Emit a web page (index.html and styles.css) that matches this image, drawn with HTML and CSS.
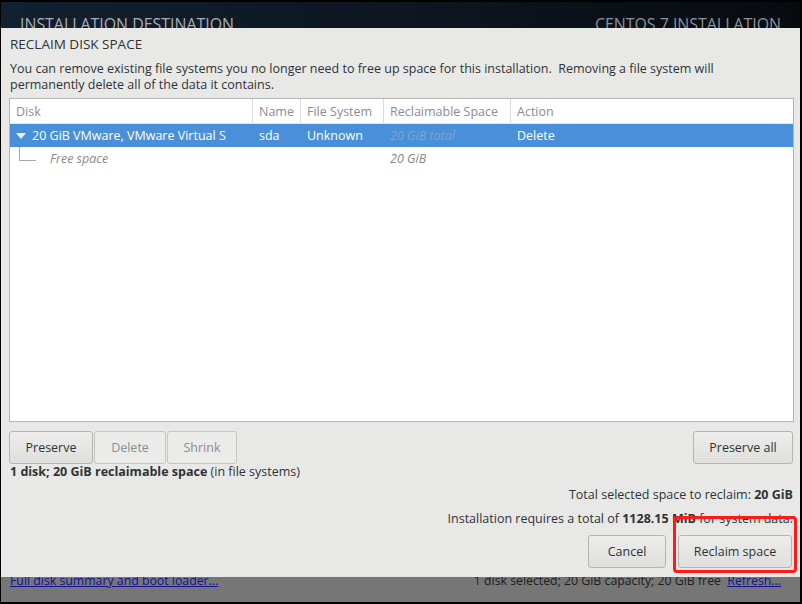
FILE: index.html
```html
<!DOCTYPE html>
<html>
<head>
<meta charset="utf-8">
<link rel="stylesheet" href="styles.css">
</head>
<body>
<div class="screen">
  <div class="header">
    <span class="h-title">INSTALLATION DESTINATION</span>
    <span class="h-product">CENTOS 7 INSTALLATION</span>
  </div>
  <div class="main">
    <div class="footer">
      <a class="link" href="#">Full disk summary and boot loader...</a>
      <span class="footer-right">1 disk selected; 20 GiB capacity; 20 GiB free&nbsp;&nbsp;<a class="link" href="#">Refresh...</a></span>
    </div>
  </div>

  <div class="dialog">
    <div class="d-title">RECLAIM DISK SPACE</div>
    <p class="d-desc">You can remove existing file systems you no longer need to free up space for this installation.&nbsp; Removing a file system will permanently delete all of the data it contains.</p>
    <div class="table">
      <div class="row head">
        <div class="c c-disk">Disk</div>
        <div class="c c-name">Name</div>
        <div class="c c-fs">File System</div>
        <div class="c c-rs">Reclaimable Space</div>
        <div class="c c-act">Action</div>
      </div>
      <div class="row sel">
        <div class="c c-disk"><span class="tri"></span>20 GiB VMware, VMware Virtual S</div>
        <div class="c c-name">sda</div>
        <div class="c c-fs">Unknown</div>
        <div class="c c-rs dim">20 GiB total</div>
        <div class="c c-act">Delete</div>
      </div>
      <div class="row child">
        <div class="c c-disk"><span class="tree"></span><span>Free space</span></div>
        <div class="c c-name"></div>
        <div class="c c-fs"></div>
        <div class="c c-rs">20 GiB</div>
        <div class="c c-act"></div>
      </div>
    </div>
    <div class="btn-row">
      <div class="group">
        <button class="btn b-preserve">Preserve</button>
        <button class="btn b-delete" disabled>Delete</button>
        <button class="btn b-shrink" disabled>Shrink</button>
      </div>
      <button class="btn b-all">Preserve all</button>
    </div>
    <div class="status"><b>1 disk; 20 GiB reclaimable space</b> (in file systems)</div>
    <div class="summary">
      <div class="sum-line">Total selected space to reclaim: <b>20 GiB</b></div>
      <div class="sum-line s2">Installation requires a total of <b>1128.15 MiB</b> for system data.</div>
    </div>
    <div class="actions">
      <button class="btn b-cancel">Cancel</button>
      <div class="highlight"><button class="btn b-reclaim">Reclaim space</button></div>
    </div>
  </div>
</div>
</body>
</html>
```

FILE: styles.css
```css
* { box-sizing: border-box; }
html, body { margin: 0; padding: 0; background: #000; }
body { font-family: "Open Sans", "DejaVu Sans", sans-serif; font-size: 12.5px; color: #2e3436; }

.screen {
  position: relative;
  width: 802px;
  height: 604px;
  background: #000;
  padding: 2px 2px 2px 1px;
  display: flex;
  flex-direction: column;
  overflow: hidden;
}

.header {
  height: 26px;
  flex-shrink: 0;
  overflow: hidden;
  background: linear-gradient(90deg, #13202f 0%, #0d1621 50%, #070b10 100%);
  display: flex;
  justify-content: space-between;
  align-items: flex-start;
  padding: 12px 19px 0 19px;
  color: #a9adb2;
  font-size: 15.9px;
  line-height: 20px;
}
.h-product { color: #8d9298; }

.main {
  flex: 1;
  background: #767676;
  display: flex;
  flex-direction: column;
  justify-content: flex-end;
}
.footer {
  display: flex;
  justify-content: space-between;
  padding: 0 19px 13px 9px;
  font-size: 12.3px;
  color: #1e1e1e;
}
.link { color: #12129a; text-decoration: underline; }

.dialog {
  position: absolute;
  left: 1px;
  top: 28px;
  width: 799px;
  height: 549px;
  background: #e8e8e7;
  padding: 7px 8px 0 8px;
  display: flex;
  flex-direction: column;
}
.dialog > * { flex-shrink: 0; }
.d-title { font-size: 13.5px; line-height: 18px; padding-left: 1px; }
.d-desc { margin: 8px 0 0 1px; line-height: 16px; width: 770px; }

.table {
  margin-top: 5px;
  width: 785px;
  height: 324px;
  background: #fff;
  border: 1px solid #b4b4b1;
}
.row { display: flex; height: 23px; align-items: center; }
.row.head { height: 25px; color: #8a8d8f; border-bottom: 1px solid #e6e6e6; }
.row.head .c { border-right: 1px solid #dcdcdc; height: 100%; display: flex; align-items: center; }
.row.head .c-act { border-right: none; }
.c { padding-left: 6px; white-space: nowrap; overflow: hidden; }
.c-disk { width: 243px; }
.c-name { width: 48px; }
.c-fs { width: 83px; }
.c-rs { width: 127px; }
.c-act { flex: 1; }

.row.sel { background: #4a90d9; color: #fff; }
.row.sel .dim { color: #7fa3cc; font-style: italic; }
.tri {
  display: inline-block;
  width: 0; height: 0;
  border-left: 5px solid transparent;
  border-right: 5px solid transparent;
  border-top: 6px solid #e9f1fb;
  margin: 0 6px 1px 0;
  vertical-align: middle;
}
.row.child { color: #888a85; font-style: italic; align-items: stretch; }
.row.child .c { display: flex; align-items: center; }
.row.child .c-disk { padding-left: 9px; }
.tree {
  align-self: flex-start;
  width: 17px;
  height: 14px;
  border-left: 1px solid #a8a8a8;
  border-bottom: 1px solid #a8a8a8;
  margin-right: 14px;
}

.btn-row {
  display: flex;
  justify-content: space-between;
  margin-top: 9px;
  width: 784px;
}
.group { display: flex; gap: 1px; }
.btn {
  font-family: inherit;
  font-size: 12.5px;
  color: #2e3436;
  height: 33px;
  border: 1px solid #b4b4b1;
  border-radius: 3px;
  background: linear-gradient(#ededec, #dededc);
  padding: 0;
  cursor: default;
}
.btn:disabled { background: #ebebea; color: #8b8e8f; border-color: #c6c6c3; }
.b-preserve { width: 84px; }
.b-delete { width: 72px; }
.b-shrink { width: 70px; }
.b-all { width: 100px; }

.status { margin-top: 0; line-height: 16px; padding-left: 1px; }
.status b { font-weight: 700; }

.summary { margin-top: 7px; text-align: right; width: 784px; }
.sum-line { line-height: 16px; }
.sum-line.s2 { margin-top: 8px; }

.actions {
  display: flex;
  justify-content: flex-end;
  align-items: flex-end;
  width: 788px;
  margin-top: -11px;
}
.b-cancel { width: 78px; margin-right: 7px; margin-bottom: 5px; }
.highlight {
  border: 3px solid #ff1a1a;
  border-radius: 4px;
  padding: 16px 2px 2px 2px;
}
.b-reclaim { width: 114px; }
```
